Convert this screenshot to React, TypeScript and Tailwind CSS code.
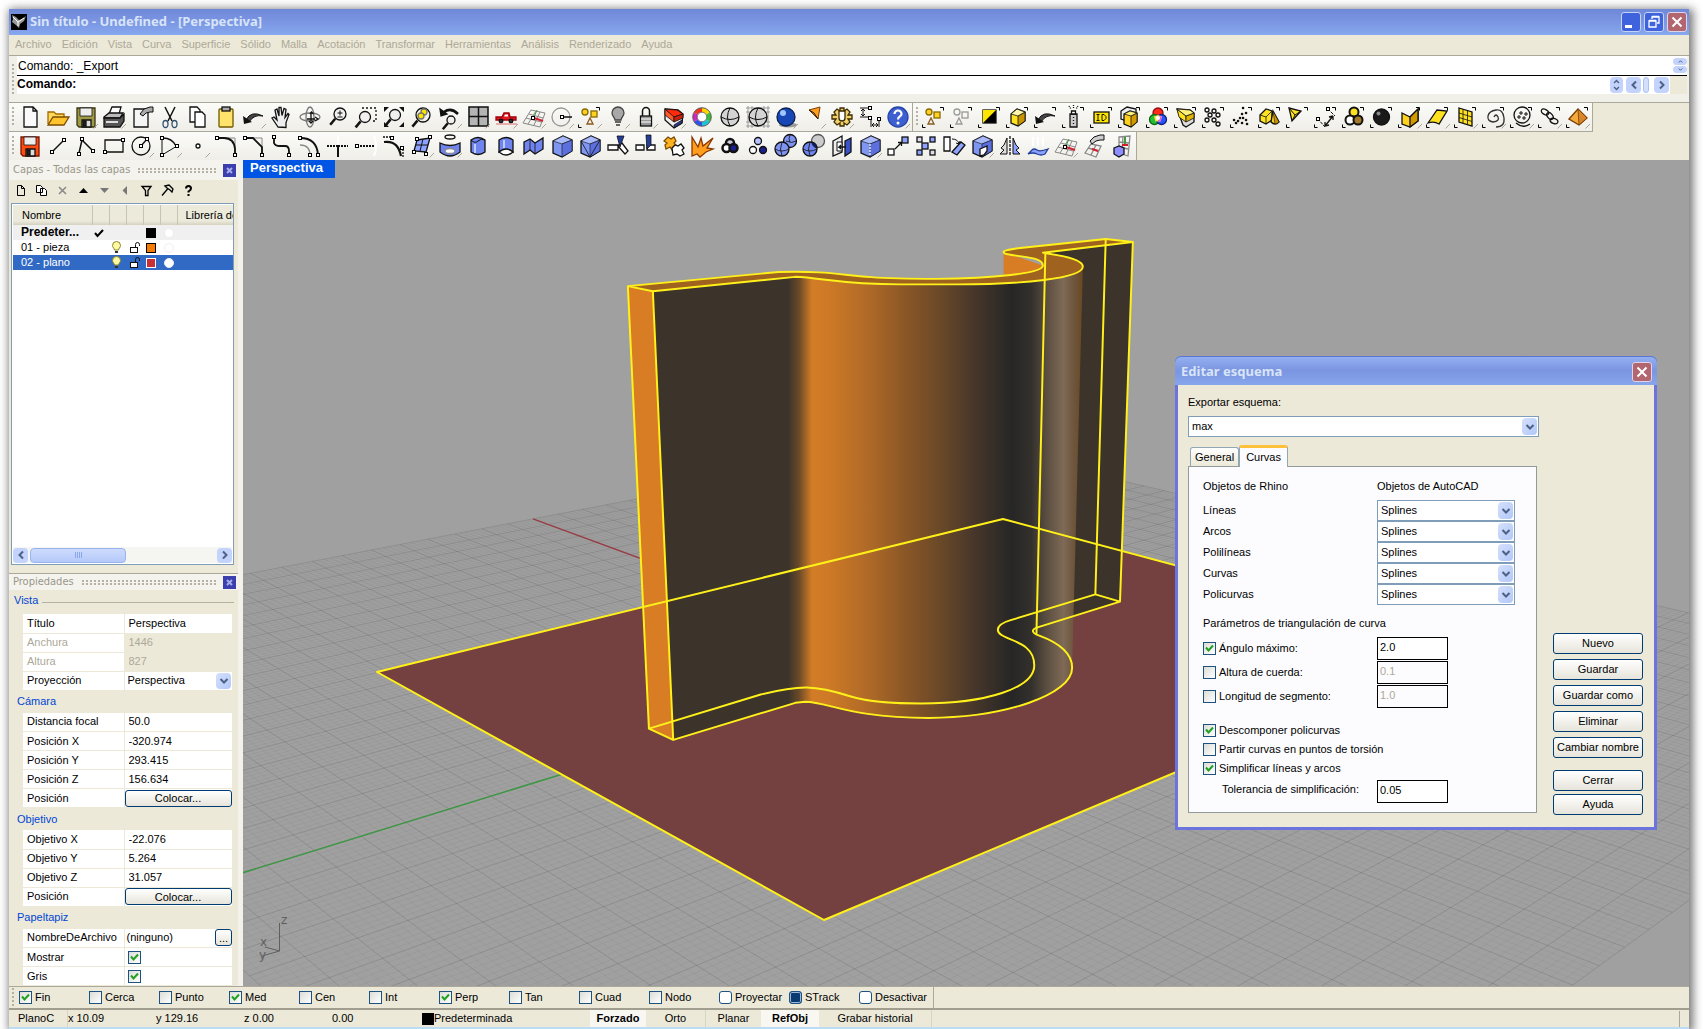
import React, { useId, useState } from 'react';

type Tool = [string, React.ReactNode];

// Small square handle used at curve ends
const Node = ({ x, y }: { x: number; y: number }) => (
  <rect x={x - 1.5} y={y - 1.5} width="3" height="3" fill="#fff" stroke="#000" strokeWidth="1" />
);
const Tick = () => <path d="M21.500 25.500L26 21" stroke="#aaa69a" strokeWidth="1" />;
const Sel = () => <path d="M20 4.500h3.500v3M2.500 21.500v3h3" stroke="#000" strokeWidth="1" />;
const Lens = ({ cx = 16, cy = 11, r = 6 }: { cx?: number; cy?: number; r?: number }) => (
  <>
    <path d={`M${cx - r * 0.8} ${cy + r * 0.8}L${cx - r * 0.8 - 5} ${cy + r * 0.8 + 6}`} strokeWidth="2.500" />
    <circle cx={cx} cy={cy} r={r} fill="#eee" fillOpacity=".7" />
  </>
);
const Cube = ({ fill = '#7f95f2', top = '#a9bafc', side = '#5c70dd' }: { fill?: string; top?: string; side?: string }) => (
  <>
    <path d="M5 9l10-5 9 4v11l-10 6-9-4z" fill={fill} />
    <path d="M5 9l10-5 9 4-10 4z" fill={top} strokeWidth=".6" />
    <path d="M14 12l10-4v11l-10 6z" fill={side} strokeWidth=".6" />
  </>
);
const Mesh = () => (
  <>
    <path d="M3 20l8-13 14 3-5 14zM6 15l15 4M9 11l14 4M8 21l8-13M14 22l6-13" stroke="#888" strokeWidth="1" />
    <path d="M14 15l9 3" stroke="#d21f2b" strokeWidth="2" />
    <path d="M14 14l3-7" stroke="#3e9c3e" strokeWidth="1" />
    <Node x={13} y={15} />
  </>
);
const UndoArrow = () => (
  <>
    <path d="M6 17Q11 7 23 13Q14 11 9 19z" fill="#444" strokeWidth="1" />
    <path d="M3 13l1 8 8-2z" fill="#111" stroke="none" />
  </>
);

const standardTools: Tool[] = [
  ['Nuevo', <path d="M8 4h9l4 4v16H8zM17 4v4h4" fill="#fafafa" />],
  ['Abrir', <><path d="M4 21V9h6l2 2h8v4" fill="#ffd95a" stroke="#a56a00" /><path d="M4 22l5-8h16l-5 8z" fill="#ffc32b" stroke="#7b4b00" /></>],
  ['Guardar', <><path d="M5 5h18v19H7l-2-2z" fill="#9f9846" stroke="#3a3712" /><path d="M8 5h12v8H8z" fill="#eee" strokeWidth=".8" /><path d="M10 17h9v7h-9z" fill="#ddd" /><path d="M11 18h3v5h-3z" fill="#222" /><Tick /></>],
  ['Imprimir', <><path d="M9 11l3-7h9l-2 7" fill="#fff" /><path d="M4 14l5-4h14l-3 5H4z" fill="#bbb" /><path d="M4 15h16l4-4v7l-4 6H4z" fill="#555" /><path d="M6 19h12" stroke="#ddd" strokeWidth="2" /><Tick /></>],
  ['Propiedades', <><path d="M6 6h14v18H6z" fill="#f4f4f4" /><path d="M12 11l4-5 6-2h3v5h-3l-4 1-3 3z" fill="#aaa" strokeWidth="1" /></>],
  ['Cortar', <><path d="M9 4l7 14M19 4l-7 14" strokeWidth="1.500" /><ellipse cx="9.500" cy="21" rx="2.500" ry="3.500" stroke="#33536f" /><ellipse cx="18.500" cy="21" rx="2.500" ry="3.500" stroke="#33536f" /></>],
  ['Copiar', <><path d="M6 4h7l3 3v12H6z" fill="#fff" /><path d="M11 9h7l3 3v12H11z" fill="#fff" /></>],
  ['Pegar', <><rect x="7" y="6" width="14" height="18" rx="1" fill="#ffe36b" stroke="#6f5a00" /><rect x="10" y="4" width="8" height="4" fill="#aaa" /></>],
  ['Deshacer', <><UndoArrow /><Tick /></>],
  ['Encuadre', <path d="M10 24l-6-9 2-1 3 3-2-10 2-1 2 7V4.500h2l1 8 2-7 2 1-1 8 3-4 1 1-3 8v5z" fill="#eee" />],
  ['Rotar vista', <><ellipse cx="14" cy="14" rx="10" ry="4" stroke="#777" /><ellipse cx="14" cy="14" rx="4" ry="10" stroke="#777" /><path d="M15 10v8M11 16h8M14 11l1.500-2 2 2M13 18l2 2 2-2M19 14l3 2-3 2" stroke="#111" /></>],
  ['Zoom dinámico', <><Lens /><path d="M13.500 10h5M16 7.500v5M13.500 14h5" strokeWidth="1" /></>],
  ['Zoom ventana', <><path d="M10 5h14v13h-4" strokeDasharray="2 2" /><Lens cx={13} cy={14} r={5.500} /></>],
  ['Zoom extensión', <><Lens cx={15} cy={12} r={5.500} /><path d="M4 4h5l-5 5zM24 4h-5l5 5zM4 24v-5l5 5zM24 24v-5l-5 5z" fill="#111" stroke="none" /></>],
  ['Zoom selección', <><Lens cx={15} cy={12} r={7} /><circle cx="16" cy="9" r="3" fill="#ffe600" stroke="#776" /><circle cx="13" cy="13" r="3" fill="#ffe600" stroke="#776" /></>],
  ['Vista anterior', <><path d="M8 9q7-5 14 2" strokeWidth="2.500" /><path d="M4 6l1 7 6-2z" fill="#111" /><Lens cx={15} cy={17} r={4} /><Tick /></>],
  ['4 vistas', <><rect x="5" y="4" width="19" height="19" fill="#b4b4b4" strokeWidth="1.500" /><path d="M14.500 4v19M5 13.500h19" strokeWidth="1.500" /><Tick /></>],
  ['Vista derecha', <><path d="M4 17v-3h6l2-4h5l1 4h6v3z" fill="#e01b24" stroke="#a00008" /><path d="M13 11.500h3v2h-4z" fill="#fff" stroke="none" /><circle cx="9" cy="18" r="1.800" fill="#333" /><circle cx="19" cy="18" r="1.800" fill="#333" /><path d="M4 21h21" stroke="#e08a8a" /><Tick /></>],
  ['Plano de construcción', <><Mesh /><Tick /></>],
  ['Refent', <><circle cx="13" cy="14" r="9" stroke="#999" /><path d="M14 14h10" strokeWidth="1.500" /><Node x={14} y={14} /><Tick /></>],
  ['Seleccionar', <><circle cx="9" cy="9" r="3" fill="#ffd21f" stroke="#8a6a00" /><rect x="15" y="8" width="6" height="6" fill="#ffd21f" stroke="#8a6a00" /><path d="M11 21l3-6 3 6z" stroke="#8a5a20" /><Sel /><Tick /></>],
  ['Ocultar', <><path d="M11 17c0-2-3-4-3-7a6 6 0 0112 0c0 3-3 5-3 7z" fill="#a8a8a8" stroke="#444" /><path d="M11 19h6M12 22h4" strokeWidth="2" stroke="#666" /><Tick /></>],
  ['Bloquear', <><path d="M10.500 13V8a3.500 3.500 0 017 0v5" strokeWidth="1.500" /><rect x="8.500" y="13" width="11" height="10" fill="#999" /><path d="M9 16h10M9 19h10" stroke="#ddd" /><Tick /></>],
  ['Capas', <><path d="M5 6l13 1 5 4-1 9-8 5-9-8z" fill="#eee" /><path d="M5 6l9 7v6l-9-7z" fill="#ff5a2c" strokeWidth=".8" /><path d="M5 6l12 1 6 4-9 3z" fill="#ff2a0c" strokeWidth=".8" /><path d="M14 14l9-3v4l-9 4z" fill="#c8200c" strokeWidth=".8" /><path d="M14 22l8-5v3l-8 5z" fill="#2a3a90" strokeWidth=".8" /><Tick /></>],
  ['Color', <><path d="M14 7a7 7 0 016 3.500" stroke="#ffd400" strokeWidth="4" /><path d="M20 10.500a7 7 0 010 7" stroke="#36c236" strokeWidth="4" /><path d="M20 17.500a7 7 0 01-6 3.500" stroke="#1ec4d8" strokeWidth="4" /><path d="M14 21a7 7 0 01-6-3.500" stroke="#3152e8" strokeWidth="4" /><path d="M8 17.500a7 7 0 010-7" stroke="#d326c4" strokeWidth="4" /><path d="M8 10.500A7 7 0 0114 7" stroke="#f2331f" strokeWidth="4" /><circle cx="14" cy="14" r="9.300" stroke="#333" strokeWidth=".8" /><circle cx="14" cy="14" r="4.800" fill="#fff" stroke="#555" strokeWidth=".8" /></>],
  ['Alámbrico', <><circle cx="14" cy="14" r="9" fill="#d4d4d4" /><path d="M14 5q-5 9 0 18M5 14q9 5 18 0" strokeWidth="1" /></>],
  ['Sombreado', <><path d="M4 3v22M8 3v22M20 3v22M24 3v22M2 5h24M2 9h24M2 19h24M2 23h24" stroke="#999" strokeWidth="1" /><circle cx="14" cy="14" r="9" fill="#d4d4d4" /><path d="M14 5q-5 9 0 18M5 14q9 5 18 0" strokeWidth="1" /></>],
  ['Renderizar', <><ellipse cx="16" cy="22" rx="9" ry="2.500" fill="#999" stroke="none" /><circle cx="14" cy="14" r="9" fill="#1746b5" stroke="#0a2050" /><circle cx="11" cy="10" r="3" fill="#9fc4ff" stroke="none" /><Tick /></>],
  ['Foco', <><path d="M9 7l11-3-2 12z" fill="#ff9d1f" stroke="#7a3d00" strokeWidth="1" /><path d="M9 7l5 3 4 6" strokeWidth="1" /><Tick /></>],
  ['Opciones', <><path d="M12 5h4v3l3-2 3 3-2 3h4v4h-4l2 3-3 3-3-2v3h-4v-3l-3 2-3-3 2-3H4v-4h4L6 9l3-3 3 2z" fill="#f1cf6b" stroke="#3a2a00" /><path d="M11 8v7a3 3 0 006 0V8z" fill="#fff" stroke="#3a2a00" /><Tick /></>],
  ['Acotación', <><path d="M4 5h10M4 14h10M7 6v7M5 8l2-2 2 2M5 11l2 2 2-2M15 15v9M23 15v9M16 22h6M18 20l-2 2 2 2M20 20l2 2-2 2" strokeWidth="1" /><Node x={14} y={5} /><Node x={14} y={15} /><Node x={23} y={16} /></>],
  ['Ayuda', <><circle cx="14" cy="14" r="10" fill="#3d5fd0" stroke="#2544a8" /><path d="M10.500 11a3.500 3.500 0 117 0c0 2.500-3.500 2.500-3.500 5.500" stroke="#fff" strokeWidth="2.200" /><circle cx="14" cy="20" r="1.500" fill="#fff" stroke="none" /><Tick /></>],
];

const selectTools: Tool[] = [
  ['Seleccionar todo', <><circle cx="9" cy="9" r="3" fill="#ffd21f" stroke="#8a6a00" /><rect x="14" y="9" width="6" height="6" fill="#ffd21f" stroke="#8a6a00" /><path d="M8 21l3-6 3 6z" stroke="#8a5a20" /><Sel /></>],
  ['No seleccionar', <><circle cx="9" cy="9" r="3" stroke="#999" /><rect x="14" y="9" width="6" height="6" stroke="#999" /><path d="M8 21l3-6 3 6z" stroke="#999" /><Sel /></>],
  ['Invertir selección', <><rect x="7" y="7" width="13" height="13" fill="#000" /><path d="M7 7h13L7 20z" fill="#ffe600" stroke="none" /><Sel /></>],
  ['Seleccionar último', <><path d="M7 11l6-5 8 3v9l-7 5-7-3z" fill="#ffe21f" /><path d="M14 13l7-4v9l-7 5z" fill="#c99300" strokeWidth=".8" /><path d="M7 11l6-5 8 3-7 4z" fill="#fff6a8" strokeWidth=".8" /><Sel /></>],
  ['Selección anterior', <><UndoArrow /><Sel /></>],
  ['Seleccionar por color', <><path d="M10 11h7v13h-7z" fill="#ccc" /><path d="M11.500 8h4v3h-4z" fill="#fff" /><path d="M13.500 14v1M13.500 17v1M13.500 20v1" /><path d="M9 3l2 3M13.500 2v3M18 3l-2 3" strokeDasharray="1 1" /><Sel /></>],
  ['Seleccionar por ID', <><rect x="6" y="9" width="15" height="11" fill="#ffe600" /><path d="M8.500 11.500h3M10 11.500v6M8.500 17.500h3M14 11.500v6h2l2-2v-2l-2-2z" strokeWidth="1" /><Sel /></>],
  ['Seleccionar duplicados', <><path d="M5 8l6-4 9 2v9l-6 4-9-3z" fill="#eee" /><path d="M8 11l6-3 7 2v9l-6 5-7-3z" fill="#ffcf1f" /><path d="M15 13l6-3v9l-6 5z" fill="#d39a00" strokeWidth=".8" /><path d="M8 11l6-3 7 2-6 3z" fill="#fff27a" strokeWidth=".8" /><Sel /></>],
  ['Seleccionar por capa', <><circle cx="14" cy="10" r="5" fill="#ff2a1a" stroke="#811" /><circle cx="10.500" cy="16.500" r="5" fill="#22c03a" stroke="#161" /><circle cx="17.500" cy="16.500" r="5" fill="#2b52ff" stroke="#127" /><path d="M10 13.500l4-1.500 4 1.500-1.500 5h-5z" fill="#ffe14a" stroke="none" /><path d="M14 13v5.500h2.500l1.500-5z" fill="#e060e0" stroke="none" /><circle cx="14" cy="15" r="2" fill="#fff" stroke="none" /><Sel /></>],
  ['Seleccionar sólidos', <><path d="M5 6l13 1 4 3v9l-8 5-3-2z" fill="#ddd" /><path d="M5 6l9 7v6l-7-5z" fill="#ffe21f" strokeWidth=".8" /><path d="M14 13l8-3v5l-8 4z" fill="#e0b400" strokeWidth=".8" /><path d="M5 6l13 1 4 3-8 3z" fill="#fff27a" strokeWidth=".8" /><Sel /></>],
  ['Seleccionar puntos', <><circle cx="7" cy="7" r="2" /><circle cx="14" cy="8" r="2" /><circle cx="10" cy="12" r="2" /><circle cx="18" cy="12" r="2" /><circle cx="7" cy="17" r="2" /><circle cx="14" cy="17" r="2" /><circle cx="18" cy="21" r="2" /><Sel /></>],
  ['Seleccionar nubes', <><path d="M15 5h.1M14 11h.1M18 10h.1M12 15h.1M6 17h.1M10 18h.1M15 15h.1M18 17h.1M14 20h.1M19 21h.1M8 20h.1" strokeWidth="2.500" strokeLinecap="round" /><Sel /></>],
  ['Seleccionar superficies', <><path d="M4 12l6-6 6 2v9l-6 4-6-3z" fill="#ffe21f" /><path d="M4 12l6 2 6-6M10 14v7" strokeWidth=".8" /><path d="M17 8l6 11q-4 4-8 0z" fill="#ffcf1f" /><path d="M17 8l6 11q-2 2-4 2z" fill="#c99300" strokeWidth=".6" /><Sel /></>],
  ['Seleccionar luces', <><path d="M5 5l12 3-9 10z" fill="#ffe21f" /><path d="M5 5l6 7 6-4M11 12l-3 6" strokeWidth="1" /><Sel /></>],
  ['Seleccionar cotas', <><path d="M6 16l7 8M16 6l7 7" strokeDasharray="3 1" strokeWidth="1" /><path d="M13 23l8-10M13 23v-4M13 23l4-1M21 13v4M21 13l-4 1" /><Node x={16} y={6} /><Node x={6} y={16} /><Sel /></>],
  ['Seleccionar bloques', <><circle cx="14" cy="9" r="4.500" fill="#ffe21f" strokeWidth="2" /><circle cx="10" cy="17" r="4.500" fill="#fff" strokeWidth="2" /><circle cx="18" cy="17" r="4.500" fill="#a37a2a" strokeWidth="2" /><Sel /></>],
  ['Seleccionar mallas', <><circle cx="13.500" cy="14" r="8" fill="#1a1a1a" /><circle cx="10.500" cy="10.500" r="2" fill="#888" stroke="none" /><Sel /></>],
  ['Seleccionar polisuperficies', <><path d="M6 10l8 4 8-8v12l-8 6-8-3z" fill="#ffd21f" /><path d="M14 14v10l8-6V6z" fill="#d39a00" /><Sel /><Tick /></>],
  ['Seleccionar abiertas', <><path d="M4 20l9-13 10 1-8 13q-5-3-11-1z" fill="#ffe21f" /><Sel /><Tick /></>],
  ['Seleccionar recortadas', <><path d="M7 5l13 4v14L7 19z" fill="#ffe21f" /><path d="M11 6v14M15.500 7.500v14M7 10l13 4M7 14.500l13 4" strokeWidth=".8" /><Sel /><Tick /></>],
  ['Seleccionar curvas', <><path d="M14 14q2-4 4 0t-5 5q-6-1-5-6t8-6 8 8-8 9" stroke="#333" /><Sel /><Tick /></>],
  ['Seleccionar control', <><circle cx="14" cy="12" r="8" /><path d="M8 20q7 6 14 1" /><path d="M12 9h2v2h-2zM17 10h2v2h-2zM10 13h2v2h-2zM15 14h2v2h-2z" fill="#fff" strokeWidth="1" /><Sel /><Tick /></>],
  ['Seleccionar cadena', <><ellipse cx="9" cy="9" rx="4" ry="2.500" transform="rotate(30 9 9)" /><ellipse cx="14" cy="13" rx="4" ry="2.500" transform="rotate(50 14 13)" /><ellipse cx="18" cy="18" rx="4" ry="2.500" transform="rotate(20 18 18)" /><Sel /><Tick /></>],
  ['Seleccionar pirámides', <><path d="M5 16l9-10 9 9-8 7z" fill="#f3a93c" stroke="#7a3d00" /><path d="M14 6l9 9-8 7z" fill="#d9852a" stroke="#7a3d00" strokeWidth=".8" /><Sel /><Tick /></>],
];

const modelTools: Tool[] = [
  ['Guardar rápido', <><path d="M5 5h18v19H7l-2-2z" fill="#ff4a12" stroke="#7a1500" /><path d="M8 5h12v8H8z" fill="#eee" strokeWidth=".8" /><path d="M10 17h9v7h-9z" fill="#ddd" /><path d="M11 18h3v5h-3z" fill="#222" /></>],
  ['Línea', <><path d="M9 19L19 9" strokeWidth="1.500" /><Node x={8} y={20} /><Node x={20} y={8} /></>],
  ['Polilínea', <><path d="M7 21L10 8l11 11" strokeWidth="1.500" /><Node x={7} y={22} /><Node x={10} y={7} /><Node x={21} y={19} /></>],
  ['Rectángulo', <><path d="M5 8h18v12H5z" /><Node x={5} y={20} /><Node x={23} y={8} /></>],
  ['Círculo', <><circle cx="13" cy="14" r="9" /><path d="M13 14l6-7" /><Node x={13} y={14} /><Node x={19} y={7} /><Tick /></>],
  ['Arco', <><path d="M6 6v17l15-9" strokeWidth="1" /><path d="M7 6q9 0 13 8" /><Node x={6} y={6} /><Node x={6} y={23} /><Node x={21} y={14} /><Tick /></>],
  ['Punto', <><circle cx="14" cy="14" r="2" fill="#fff" /><Tick /></>],
  ['Empalmar', <><path d="M5 6h18v18" stroke="#888" strokeWidth="1" /><path d="M5 6h7q10 0 11 11v6" strokeWidth="1.800" /><Node x={5} y={6} /><Node x={23} y={23} /></>],
  ['Chaflán', <><path d="M5 6h17v17" stroke="#888" strokeWidth="1" /><path d="M5 6h8l9 9v8" strokeWidth="1.800" /><Node x={5} y={6} /><Node x={22} y={23} /></>],
  ['Mezclar', <><path d="M6 5v6q1 3 6 3h5q4 0 4 5v4" strokeWidth="1.800" /><Node x={6} y={5} /><Node x={21} y={23} /></>],
  ['Desfasar', <><path d="M4 6q17 0 18 17" strokeWidth="1.800" /><path d="M4 13q10 0 10 10" stroke="#888" /><Node x={4} y={6} /><Node x={22} y={23} /><Node x={14} y={23} /></>],
  ['Recortar', <><path d="M14 3v9" stroke="#fff" strokeWidth="2" /><path d="M3 14h11" strokeDasharray="2 1" strokeWidth="2" /><path d="M14 14v11" strokeWidth="2" /><path d="M14 14h10" strokeDasharray="2 1" strokeWidth="2" /></>],
  ['Extender', <><path d="M8 14h14" strokeDasharray="2 1" strokeWidth="2" /><path d="M22 4q4 10 0 20" stroke="#fff" strokeWidth="2" /><Node x={5} y={14} /></>],
  ['Reconstruir', <><path d="M3 5h10M23 14v11" strokeDasharray="2 1" /><path d="M4 10q14-2 17 14" strokeWidth="2.200" /><Node x={12} y={6} /><Node x={22} y={16} /></>],
  ['Superficie por puntos', <><path d="M9 8l13-2-4 14-12-1z" fill="#8ea2ff" /><path d="M15 7l-3 12M8 13l12 0" strokeWidth="1" /><Node x={9} y={7} /><Node x={22} y={5} /><Node x={6} y={20} /><Node x={18} y={22} /><Tick /></>],
  ['Transición', <><ellipse cx="14" cy="5" rx="5" ry="2" /><path d="M4 11q10 5 20 0v9q-10 8-20 0z" fill="#6f84ee" /><ellipse cx="14" cy="19" rx="5" ry="2.500" fill="#fff" stroke="#889" /><Tick /></>],
  ['Barrido 1', <><path d="M7 8q7-5 14 0v12q-7 5-14 0z" fill="#6f84ee" /><path d="M7 8q4 4 7 1t7-1" strokeWidth="1" /><path d="M11 12v9" stroke="#bfcaff" strokeWidth="2" /></>],
  ['Barrido 2', <><path d="M7 8q7-5 14 0v12q-7-5-14 0z" fill="#6f84ee" /><path d="M12 8v8" stroke="#bfcaff" strokeWidth="2" /><path d="M7 20q7 6 14 0q-7-6-14 0z" fill="#fff" /></>],
  ['Revolución', <><path d="M4 10l6-3 5 4 8-5v11l-8 5-5-4-6 4z" fill="#6f84ee" /><path d="M10 7v11M15 11v11" strokeWidth=".8" /></>],
  ['Caja', <Cube />],
  ['Caja facetada', <><Cube /><path d="M5 9l9 16 10-17" strokeWidth=".8" /></>],
  ['Partir', <><path d="M4 13h10v5H4zM14 14l4-3 6 8-3 3z" fill="#fff" /><path d="M13 4h7l-4 11z" fill="#233e9a" strokeWidth=".8" /></>],
  ['Cortar sólido', <><path d="M4 13h8v5H4zM15 13h8v5h-8z" fill="#fff" /><path d="M14 3h5v10l-4 4z" fill="#233e9a" strokeWidth=".8" /></>],
  ['Unir', <><path d="M4 9l4-4 3 2 3-2 2 4-2 2 3 3-5 4-2-3-4 2-1-4 2-2z" fill="#ffb21f" stroke="#7a4d00" /><path d="M12 16l3-3 3 1 3-2 3 4-2 2 2 4-4 2-3-2-4 1z" fill="#fff" /></>],
  ['Descomponer', <path d="M4 24V5l6 10 3-9 2 8 10-8-6 10 6 1-7 3-6 5-3-3z" fill="#ff9d1f" stroke="#8a3800" />],
  ['Agrupar', <><circle cx="14" cy="11" r="4" fill="#ccd" strokeWidth="2.500" /><circle cx="10.500" cy="16" r="4" fill="#fff" strokeWidth="2.500" /><circle cx="17.500" cy="16" r="4" fill="#1a1f8a" strokeWidth="2.500" /></>],
  ['Desagrupar', <><circle cx="14" cy="9" r="3.500" fill="#b9c1ff" /><circle cx="9" cy="18" r="3.500" fill="#fff" /><circle cx="19" cy="18" r="3.500" fill="#1a1f8a" /></>],
  ['Unión booleana', <><circle cx="18" cy="9" r="6.500" fill="#7f93f2" /><circle cx="10" cy="17" r="7" fill="#7f93f2" /><path d="M10 10q-3 7 0 14M3 17q7 4 14 0M18 3q-2 4 0 7M14 9q6 3 10 0" strokeWidth=".8" /></>],
  ['Diferencia booleana', <><circle cx="18" cy="9" r="6.500" fill="#ccc" stroke="#555" /><circle cx="10" cy="17" r="7" fill="#6f84ee" /><path d="M10 10q-3 7 0 14M3 17q7 4 14 0" strokeWidth=".8" /><path d="M12 10a6.500 6.500 0 005 6q0-5-5-6z" fill="#0e1c6a" strokeWidth=".8" /></>],
  ['Extruir', <><path d="M5 9l9-5v16l-9 4z" fill="#eee" /><path d="M9 10h5v9H9z" fill="#fff" strokeWidth="1" /><path d="M17 9l6-3v14l-6 4z" fill="#3a52c8" /><path d="M18 15h-7l2-2M11 15l2 2" /></>],
  ['Tapar', <><Cube /><path d="M14 12v12" stroke="#fff" strokeDasharray="2 1" /><Tick /></>],
  ['Mover', <><path d="M11 17l6-6M14 10.500l3.500 0v3.500" /><rect x="4" y="17" width="6" height="6" fill="#fff" /><rect x="18" y="5" width="6" height="6" fill="#8ea2ff" /></>],
  ['Matriz', <><rect x="5" y="5" width="5" height="5" fill="#dde" /><rect x="18" y="5" width="5" height="5" fill="#8ea2ff" /><rect x="10" y="11" width="6" height="6" fill="#8ea2ff" /><rect x="5" y="18" width="5" height="5" fill="#8ea2ff" /><rect x="18" y="18" width="5" height="5" fill="#dde" /></>],
  ['Rotar', <><path d="M4 5h6v14H4z" fill="#fff" /><path d="M12 20l9-10 4 3-8 10z" fill="#8ea2ff" /><path d="M12 7q6 0 7 5M19 12l-3-1M19 12l1-3" strokeWidth="1" /></>],
  ['Editar sólido', <><Cube /><path d="M12 17l7-3v5l-3 4-4 1z" fill="#fff" /><Tick /></>],
  ['Simetría', <><path d="M14 4v20" strokeDasharray="3 1" /><path d="M11 6v16H4l4-4-3-2 3-3z" fill="#ddd" strokeWidth="1" /><path d="M17 6v16h7l-4-4 3-2-3-3z" fill="#8ea2ff" strokeWidth="1" /></>],
  ['Proyectar', <><path d="M9 5v9M14 5v9M19 5v9" stroke="#fff" strokeWidth="2" /><path d="M4 22l4-4q2-2 5 0t11-1l-3 5q-4 2-8 0t-9 0z" fill="#8ea2ff" stroke="#24419a" /></>],
  ['Plano C', <><Mesh /><Tick /></>],
  ['Mover plano C', <><path d="M5 21l6-9 10 2-5 11zM8 16l11 3M11 23l5-10" stroke="#888" /><path d="M10 9l4-4 6-2h4v5h-4l-4 1-4 3z" fill="#ccc" strokeWidth="1" /><path d="M12 17l6 2" stroke="#d21f2b" strokeWidth="2" /></>],
  ['Plano C a objeto', <><path d="M11 5l11-1-2 20-9-3zM15 4l-1 18M11 10l10 1M11 15l9 2" stroke="#888" /><path d="M17 5v8" stroke="#3e9c3e" strokeWidth="2" /><path d="M14 13h6" stroke="#d21f2b" strokeWidth="2" /><path d="M6 16l5-2 5 2v6l-5 3-5-3z" fill="#8e8eff" /></>],
];

const Grip = () => (
  <span className="mr-[2px] ml-[3px] h-5 w-[2px] bg-[repeating-linear-gradient(180deg,#b5b2a5_0_2px,transparent_2px_4px)]" />
);

const Toolbar = ({ tools, label }: { tools: Tool[]; label: string }) => (
  <div role="toolbar" aria-label={label} className="flex h-7 shrink-0 items-center border-r border-[#aca899] bg-gradient-to-b from-[#fbfbf9] to-[#efeee8]">
    <Grip />
    {tools.map(([name, art]) => (
      <button key={name} type="button" aria-label={name} className="h-7 w-7">
        <svg viewBox="0 0 28 28" className="size-7" fill="none" stroke="#111" strokeWidth="1.300">
          {art}
        </svg>
      </button>
    ))}
  </div>
);

const Chevron = ({ className = 'size-[10px]' }: { className?: string }) => (
  <svg viewBox="0 0 10 10" className={className} fill="none" stroke="#4d6185" strokeWidth="2">
    <path d="M1.500 3L5 6.500 8.500 3" />
  </svg>
);

const SelectBox = ({ options, className = '', border = true, label, id }: { options: string[]; className?: string; border?: boolean; label?: string; id?: string }) => (
  <div className={'relative bg-white ' + (border ? 'border border-[#7f9db9] ' : '') + className}>
    <select id={id} aria-label={label} className="block h-full w-full appearance-none bg-transparent pl-[3px] text-[11px] text-black outline-none">
      {options.map((o) => (
        <option key={o}>{o}</option>
      ))}
    </select>
    <span className="pointer-events-none absolute inset-y-px right-px flex w-[15px] items-center justify-center rounded-sm bg-gradient-to-br from-[#d5e0fc] to-[#b2c8f8]">
      <Chevron />
    </span>
  </div>
);

const Check = ({ label, checked = false, hideLabel = false, round = false }: { label: string; checked?: boolean; hideLabel?: boolean; round?: boolean }) => {
  const id = useId();
  const [on, setOn] = useState(checked);
  return (
    <span className="flex items-center">
      <span className="relative size-[13px] shrink-0">
        <input
          id={id}
          type="checkbox"
          checked={on}
          aria-label={hideLabel ? label : undefined}
          onChange={(e) => setOn(e.target.checked)}
          className={
            'block size-[13px] appearance-none border border-[#1c5180] ' +
            (round ? 'rounded-[3px] bg-white checked:bg-[#0b3a73] checked:shadow-[inset_0_0_0_1px_#9db7d8]' : 'bg-gradient-to-br from-[#dcdcd7] to-white')
          }
        />
        {on && !round && (
          <svg viewBox="0 0 13 13" className="pointer-events-none absolute inset-0" fill="none" stroke="#21a121" strokeWidth="2">
            <path d="M3 5.500l2.500 3L10 3.500" />
          </svg>
        )}
      </span>
      {!hideLabel && <label htmlFor={id} className="pl-[3px] whitespace-nowrap">{label}</label>}
    </span>
  );
};

const XpButton = ({ children, className = '' }: { children: React.ReactNode; className?: string }) => (
  <button type="button" className={'rounded-[3px] border border-[#003c74] bg-gradient-to-b from-white to-[#e6e4da] text-center whitespace-nowrap ' + className}>
    {children}
  </button>
);

const tahoma = '"DejaVu Sans Condensed", "Noto Sans", sans-serif';

const PanelHeader = ({ title, className = 'h-5' }: { title: string; className?: string }) => (
  <div className={'flex shrink-0 items-center bg-[#f4f3ee] pr-[2px] pl-1 ' + className}>
    <h2 className="pr-2 text-[11px] text-[#9a978a]" style={{ fontFamily: tahoma }}>{title}</h2>
    <span className="h-[5px] flex-1 bg-[repeating-linear-gradient(90deg,#b5b2a5_0_2px,transparent_2px_4px)] [mask-image:linear-gradient(#000_0_2px,transparent_2px_3px,#000_3px)]" />
    <button type="button" aria-label={'Cerrar ' + title} className="ml-[5px] size-[13px] bg-[#3c3fae]">
      <svg viewBox="0 0 13 13" stroke="#a9adec" strokeWidth="2">
        <path d="M4 4l5 5M9 4l-5 5" />
      </svg>
    </button>
  </div>
);

const menus = ['Archivo', 'Edición', 'Vista', 'Curva', 'Superficie', 'Sólido', 'Malla', 'Acotación', 'Transformar', 'Herramientas', 'Análisis', 'Renderizado', 'Ayuda'];

const Bulb = () => (
  <svg viewBox="0 0 13 13" className="size-[13px]" fill="#fff9a0" stroke="#8a8330">
    <path d="M4.500 9C4.500 7.500 2.500 6.500 2.500 4.500a4 4 0 018 0C10.500 6.500 8.500 7.500 8.500 9z" />
    <path d="M5 11h3" stroke="#333" strokeWidth="2" />
  </svg>
);
const OpenLock = () => (
  <svg viewBox="0 0 13 13" className="size-[13px]" fill="#fff" stroke="#111">
    <path d="M7.500 6V3.500a2 2 0 014 0V5" fill="none" />
    <rect x="2.500" y="6.500" width="7" height="5" />
  </svg>
);

interface Layer {
  name: string;
  current?: boolean;
  color: string;
  row: string;
}
const layers: Layer[] = [
  { name: 'Predeter...', current: true, color: 'bg-black', row: 'bg-[#f0f0f0] font-bold' },
  { name: '01 - pieza', color: 'bg-[#f57c00] border border-black', row: 'bg-white' },
  { name: '02 - plano', color: 'bg-[#c93036] border border-white', row: 'bg-[#316ac5] text-white' },
];

const LayersPanel = () => (
  <section className="flex flex-col">
    <PanelHeader title="Capas - Todas las capas" />
    <div className="flex h-[22px] items-center pb-px pl-1">
      {[
        ['Capa nueva', <path d="M4.500 2.500h4l3 3v7h-7zM8.500 2.500v3h3" />],
        ['Subcapa', <path d="M2.500 2.500h4l2 2v5h-6zM6.500 5.500h4l2 2v5h-6z" fill="#fff" />],
        ['Eliminar capa', <path d="M4 4l7 7M11 4l-7 7" stroke="#888" strokeWidth="1.500" />],
        ['Subir', <path d="M3 10l4.500-5 4.500 5z" fill="#000" stroke="none" />],
        ['Bajar', <path d="M3 5l4.500 5L12 5z" fill="#777" stroke="none" />],
        ['Nivel superior', <path d="M9 3v9L4.500 7.500z" fill="#777" stroke="none" />],
        ['Filtro', <path d="M3 3.500h9L9 7.500v5H6.500v-5z" strokeWidth="1.300" />],
        ['Herramientas de capa', <path d="M2 12.500l6-7M5 3l4-1 4 4-1 3-2-2-3-2z" strokeWidth="1.300" />],
        ['Ayuda de capas', <path d="M5 5.500q0-2.500 2.500-2.500t2.500 2.500q0 1.500-2.500 3v1M7.500 11v2" strokeWidth="2" />],
      ].map(([name, art]) => (
        <button key={name as string} type="button" aria-label={name as string} className="flex w-[21px] justify-start">
          <svg viewBox="0 0 15 15" className="size-[15px]" fill="none" stroke="#000">{art}</svg>
        </button>
      ))}
    </div>
    <div className="mt-px mr-1 ml-[2px] flex h-[362px] flex-col overflow-hidden border border-[#7f9db9] bg-white p-px">
      <table className="w-[260px] table-fixed border-collapse text-[11px] leading-[15px]">
        <colgroup>
          <col className="w-[79px]" />
          <col className="w-[17px]" />
          <col className="w-[17px]" />
          <col className="w-[17px]" />
          <col className="w-[17px]" />
          <col className="w-[17px]" />
          <col />
        </colgroup>
        <thead>
          <tr className="h-5 bg-gradient-to-b from-[#ebeadb] from-80% to-[#d5d1bf] text-left">
            <th className="border-r border-[#c7c5b2] pl-[9px] font-normal">Nombre</th>
            {[0, 1, 2, 3, 4].map((i) => (
              <td key={i} className="border-r border-[#c7c5b2]" />
            ))}
            <th className="pl-2 font-normal whitespace-nowrap">Librería de</th>
          </tr>
        </thead>
        <tbody>
          {layers.map((l) => (
            <tr key={l.name} className={'h-[15px] ' + l.row}>
              <td className={'pl-2 whitespace-nowrap ' + (l.current ? 'text-[12px]' : '')}>{l.name}</td>
              <td>
                {l.current && (
                  <svg viewBox="0 0 13 13" className="size-[13px]" fill="none" stroke="#000" strokeWidth="2">
                    <path d="M3 7l2.500 3L11 4" />
                  </svg>
                )}
              </td>
              <td className="pl-px">{!l.current && <Bulb />}</td>
              <td className="pl-[2px]">{!l.current && <OpenLock />}</td>
              <td><span className={'ml-[3px] block size-[10px] ' + l.color} /></td>
              <td><span className="ml-1 block size-[10px] rounded-full border border-[#eee] bg-white" /></td>
              <td />
            </tr>
          ))}
        </tbody>
      </table>
      <div className="mt-auto flex h-4 items-center bg-[#f5f5f1]">
        <button type="button" aria-label="Desplazar a la izquierda" className="flex size-[15px] items-center justify-center rounded-sm bg-[#c3d3fc]"><Chevron className="size-[10px] rotate-90" /></button>
        <span className="ml-[2px] flex h-[15px] w-24 items-center justify-center gap-px rounded-sm border border-[#98b4f0] bg-gradient-to-b from-[#cddbfe] to-[#b5c9f9]">
          {[0, 1, 2, 3].map((i) => <i key={i} className="h-[6px] w-px bg-[#8ba8ea]" />)}
        </span>
        <button type="button" aria-label="Desplazar a la derecha" className="ml-auto flex size-[15px] items-center justify-center rounded-sm bg-[#c3d3fc]"><Chevron className="size-[10px] -rotate-90" /></button>
      </div>
    </div>
  </section>
);

type Prop = [string, string, ('off' | 'select' | 'button' | 'file' | 'check')?];
const sections: { title: string; rows: Prop[] }[] = [
  { title: 'Vista', rows: [['Título', 'Perspectiva'], ['Anchura', '1446', 'off'], ['Altura', '827', 'off'], ['Proyección', 'Perspectiva', 'select']] },
  { title: 'Cámara', rows: [['Distancia focal', '50.0'], ['Posición X', '-320.974'], ['Posición Y', '293.415'], ['Posición Z', '156.634'], ['Posición', 'Colocar...', 'button']] },
  { title: 'Objetivo', rows: [['Objetivo X', '-22.076'], ['Objetivo Y', '5.264'], ['Objetivo Z', '31.057'], ['Posición', 'Colocar...', 'button']] },
  { title: 'Papeltapiz', rows: [['NombreDeArchivo', '(ninguno)', 'file'], ['Mostrar', '', 'check'], ['Gris', '', 'check']] },
];

const PropertyValue = ({ row }: { row: Prop }) => {
  const [label, value, kind] = row;
  if (kind === 'select') return <SelectBox options={[value, 'Paralela']} label={label} border={false} className="h-[18px] w-full" />;
  if (kind === 'button') return <XpButton className="block h-[17px] w-[107px] leading-[14px]">{value}</XpButton>;
  if (kind === 'check') return <span className="block pl-[3px]"><Check label={label} checked hideLabel /></span>;
  if (kind === 'file')
    return (
      <span className="flex items-center justify-between pl-[2px]">
        {value}
        <XpButton className="h-[17px] w-[17px] leading-[14px]">...</XpButton>
      </span>
    );
  return <input aria-label={label} defaultValue={value} disabled={kind === 'off'} className="block w-full bg-transparent pl-1 outline-none" />;
};

const PropertiesPanel = () => (
  <section className="mt-2 flex min-h-0 flex-1 flex-col border-t border-[#aca899]">
    <PanelHeader title="Propiedades" className="h-4" />
    <div className="mr-1 ml-[2px] min-h-0 flex-1 overflow-hidden bg-[#ece9d8] text-[11px] leading-[15px]">
      {sections.map((s, i) => (
        <div key={s.title}>
          <div className={'flex items-center gap-1 text-[#0046d5] ' + (i === 0 ? 'h-6 pb-1 pl-[3px]' : 'h-[22px] pl-[6px]')}>
            <h3>{s.title}</h3>
            {i === 0 && <span className="mt-1 h-px flex-1 bg-[#b5b2a0]" />}
          </div>
          <table className="mr-[3px] ml-3 w-[209px] table-fixed border-collapse">
            <tbody>
              {s.rows.map((r) => (
                <tr key={r[0]} className="h-[19px] border-b border-[#ece9d8]">
                  <th className={'w-[101px] border-r border-[#ece9d8] bg-white pl-1 text-left font-normal ' + (r[2] === 'off' ? 'text-[#aca899]' : '')}>{r[0]}</th>
                  <td className={r[2] === 'off' ? 'text-[#aca899]' : 'bg-white'}><PropertyValue row={r} /></td>
                </tr>
              ))}
            </tbody>
          </table>
        </div>
      ))}
    </div>
  </section>
);

// Projects ground-plane coordinates (-1..1) to viewport pixels
const project = (u: number, v: number) => {
  const w = 1 - 0.3 * u - 0.287 * v;
  return [(230.7 * u - 806.8 * v + 923.6) / w, (-12 * u - 23 * v + 662.6) / w].map((n) => n.toFixed(1)).join(' ');
};
const gridPath = (steps: number) => {
  let d = '';
  for (let i = -steps; i <= steps; i++) {
    const t = i / steps;
    d += `M${project(t, -1)}L${project(t, 1)}M${project(-1, t)}L${project(1, t)}`;
  }
  return d;
};

const Viewport = () => (
  <svg viewBox="243 160 1446 827" preserveAspectRatio="xMinYMin slice" className="absolute inset-0 h-full w-full" fill="none">
    <defs>
      <linearGradient id="body" gradientUnits="userSpaceOnUse" x1="148" x2="1352" y1="0" y2="0">
        <stop offset=".315" stopColor="#3c342b" />
        <stop offset=".34" stopColor="#6b4a28" />
        <stop offset=".37" stopColor="#d37c26" />
        <stop offset=".41" stopColor="#cd7926" />
        <stop offset=".5" stopColor="#b06a27" />
        <stop offset=".59" stopColor="#895626" />
        <stop offset=".67" stopColor="#694828" />
        <stop offset=".75" stopColor="#46362a" />
        <stop offset=".835" stopColor="#262626" />
        <stop offset=".88" stopColor="#33302c" />
        <stop offset=".915" stopColor="#5a4d40" />
        <stop offset=".955" stopColor="#7f6a56" />
        <stop offset=".98" stopColor="#6d553c" />
        <stop offset="1" stopColor="#6b4820" />
      </linearGradient>
    </defs>
    <path d={gridPath(100)} stroke="#000" strokeOpacity=".05" strokeWidth=".7" />
    <path d={gridPath(20)} stroke="#000" strokeOpacity=".08" />
    <path d={`M${project(-1, 0)}L${project(0, 0)}`} stroke="#973f47" strokeWidth="1.500" />
    <path d={`M${project(0, 0)}L${project(0, 1)}`} stroke="#3f9645" strokeWidth="1.500" />
    <path d="M377 672L1003 519 1476 646 824 920z" fill="#754040" />
    <g transform="translate(600 220) scale(.35714 .34435)">
      <path d="M1130 93L1240 132 1240 175 1130 175z" fill="#d97d24" />
      <path d="M1240 95L1492 64 1456 1108 1222 1185z" fill="#3c342b" />
      <path d="M78 192L148 207 205 1510 137 1477z" fill="#d97d24" />
      <path d="M148 207L547 165C620 168 680 187 840 187H1000C1180 187 1352 170 1352 135L1322 1300C1322 1380 1130 1445 920 1446C700 1446 640 1400 575 1399L547 1402 205 1510z" fill="url(#body)" />
      <path d="M78 192L500 151C640 148 660 158 760 166C820 171 880 171 940 171C1100 170 1240 155 1240 132C1240 100 1130 108 1130 93C1130 88 1150 85 1170 82L1416 55 1492 64 1240 95C1240 97 1352 106 1352 135C1352 170 1180 187 1000 187H840C680 187 620 168 547 165L148 207z" fill="#a0621f" />
    </g>
    <g stroke="#fff01a" strokeWidth="2" strokeLinejoin="round">
      <path d="M377 672L1003 519 1476 646 824 920z" />
      <g transform="translate(600 220) scale(.35714 .34435)" strokeWidth="5.500">
        <path d="M78 192L500 151C640 148 660 158 760 166C820 171 880 171 940 171C1100 170 1240 155 1240 132C1240 100 1130 108 1130 93C1130 88 1150 85 1170 82L1416 55 1492 64 1240 95C1240 97 1352 106 1352 135C1352 170 1180 187 1000 187H840C680 187 620 168 547 165L148 207z" />
        <path d="M137 1477L450 1378C560 1350 600 1350 700 1383C760 1402 830 1404 900 1404C1080 1404 1216 1360 1216 1293C1216 1215 1114 1222 1114 1190C1114 1175 1130 1168 1150 1162L1387 1087 1456 1108 1225 1183C1205 1190 1210 1200 1230 1207C1290 1230 1322 1260 1322 1300C1322 1380 1130 1445 920 1446C700 1446 640 1400 575 1399L547 1402 205 1510z" />
        <path d="M78 192L137 1477M148 207L205 1510M1247 95L1222 1205M1416 55L1387 1087M1492 64L1456 1108" />
      </g>
    </g>
    <path d="M279.500 923V951L265 947M279.500 951L262 956" stroke="#5f5f5f" />
    <g fill="#5f5f5f" fontFamily="DejaVu Sans" fontSize="12">
      <text x="281" y="924">z</text>
      <text x="260" y="946">x</text>
      <text x="259" y="959">y</text>
    </g>
  </svg>
);

const curveTypes = ['Líneas', 'Arcos', 'Polilíneas', 'Curvas', 'Policurvas'];
const tessellation: [string, string, boolean][] = [
  ['Ángulo máximo:', '2.0', true],
  ['Altura de cuerda:', '0.1', false],
  ['Longitud de segmento:', '1.0', false],
];

const SchemeDialog = () => (
  <div role="dialog" aria-labelledby="dlg-title" className="absolute top-[196px] right-8 w-[482px] rounded-t-md border-[3px] border-t-0 border-[#6a74dc] bg-[#ece9d8] text-[11px] leading-[15px] text-black">
    <div className="-mx-[3px] flex h-[29px] items-center justify-between rounded-t-md bg-gradient-to-b from-[#96b2f2] via-[#7b95e0] to-[#86a6ec] pt-[2px] pr-[5px] pl-[6px] shadow-[inset_0_1px_0_#5b74d0]">
      <h2 id="dlg-title" className="text-[13px] font-bold text-[#d8e4f8]" style={{ fontFamily: '"Noto Sans", sans-serif' }}>Editar esquema</h2>
      <button type="button" aria-label="Cerrar" className="size-5 rounded-[3px] border border-[#e0d5e8] bg-[#b2666f]">
        <svg viewBox="0 0 18 18" stroke="#fff" strokeWidth="2"><path d="M4.500 4.500l9 9M13.500 4.500l-9 9" /></svg>
      </button>
    </div>
    <div className="flex gap-4 px-[10px] pt-[10px] pb-3">
      <div className="w-[349px]">
        <label htmlFor="scheme" className="block">Exportar esquema:</label>
        <SelectBox id="scheme" options={['max', 'Predeterminado']} className="mt-[6px] h-[21px] w-[351px]" />
        <div role="tablist" className="relative mt-2 flex h-[21px] items-end pl-[2px]">
          <button role="tab" type="button" aria-selected="false" className="h-[19px] rounded-t-[3px] border border-b-0 border-[#91a7b4] bg-gradient-to-b from-white to-[#ece9d8] px-1 pt-px">General</button>
          <button role="tab" type="button" aria-selected="true" className="-mb-px h-[22px] rounded-t-[3px] border border-t-[3px] border-b-0 border-[#91a7b4] border-t-[#ffc13b] bg-[#fcfcfe] px-[6px] pb-px">Curvas</button>
        </div>
        <div role="tabpanel" className="h-[347px] border border-[#919b9c] bg-[#fcfcfe] px-[14px] pt-3">
          <div className="flex items-center">
            <span className="w-[174px]">Objetos de Rhino</span>
            <span>Objetos de AutoCAD</span>
          </div>
          <div className="mt-[6px]">
            {curveTypes.map((c) => (
              <div key={c} className="flex h-[21px] items-center">
                <label htmlFor={'t-' + c} className="w-[174px]">{c}</label>
                <SelectBox id={'t-' + c} options={['Splines', 'Polilíneas']} className="h-[21px] w-[138px]" />
              </div>
            ))}
          </div>
          <p className="mt-[11px]">Parámetros de triangulación de curva</p>
          <div className="mt-[6px] flex flex-col gap-px">
            {tessellation.map(([label, value, on]) => (
              <div key={label} className="flex h-[23px] items-center">
                <span className="w-[174px]"><Check label={label} checked={on} /></span>
                <input aria-label={label} defaultValue={value} disabled={!on} className="h-[23px] w-[71px] border border-black bg-white px-[2px] pb-1 disabled:bg-[#fcfcfe] disabled:text-[#aca899]" />
              </div>
            ))}
          </div>
          <div className="mt-[15px] flex flex-col gap-1">
            <Check label="Descomponer policurvas" checked />
            <Check label="Partir curvas en puntos de torsión" />
            <Check label="Simplificar líneas y arcos" checked />
          </div>
          <div className="mt-1 flex h-[23px] items-center">
            <label htmlFor="tol" className="w-[174px] pb-1 pl-[19px]">Tolerancia de simplificación:</label>
            <input id="tol" defaultValue="0.05" className="h-[23px] w-[71px] border border-black bg-white px-[2px] pb-1" />
          </div>
        </div>
      </div>
      <div className="flex w-[90px] flex-col gap-[5px] pt-[238px]">
        {['Nuevo', 'Guardar', 'Guardar como', 'Eliminar', 'Cambiar nombre'].map((b) => (
          <XpButton key={b} className="h-[21px]">{b}</XpButton>
        ))}
        <div className="mt-[7px] flex flex-col gap-[3px]">
          <XpButton className="h-[21px]">Cerrar</XpButton>
          <XpButton className="h-[21px]">Ayuda</XpButton>
        </div>
      </div>
    </div>
  </div>
);

const snaps: [string, boolean][] = [
  ['Fin', true], ['Cerca', false], ['Punto', false], ['Med', true], ['Cen', false], ['Int', false], ['Perp', true],
  ['Tan', false], ['Cuad', false], ['Nodo', false], ['Proyectar', false], ['STrack', true], ['Desactivar', false],
];

const App: React.FC = () => {
  const [command, setCommand] = useState('');

  return (
    <div className="flex h-screen flex-col overflow-hidden bg-white pt-[9px] pr-[14px] pl-[9px] text-[11px] text-black" style={{ fontFamily: '"Liberation Sans", Arial, sans-serif' }}>
      <div className="flex min-h-0 flex-1 flex-col bg-[#ece9d8] shadow-[2px_2px_9px_2px_rgba(0,0,0,0.55)]">
        <header className="flex h-[26px] shrink-0 items-center bg-gradient-to-b from-[#6f88d8] via-[#7b96e3] to-[#86a8ee] pr-[2px] pl-[2px]">
          <svg viewBox="0 0 16 16" className="size-4 bg-black">
            <path d="M1 1l4 2 3 3 3-1 4-3-2 5-4 3-1 4-3-3-4-3 1-3z" fill="#999" />
            <path d="M2 3l5 5 6-4M7 8v4" stroke="#fff" fill="none" />
          </svg>
          <h1 className="pl-[3px] text-[13px] font-bold text-[#d8e4f8]" style={{ fontFamily: '"Noto Sans", sans-serif' }}>Sin título - Undefined - [Perspectiva]</h1>
          <div className="ml-auto flex gap-[3px]">
            <button type="button" aria-label="Minimizar" className="size-5 rounded-[3px] border border-[#c5d3f5] bg-[#3e63dd]">
              <svg viewBox="0 0 18 18"><path d="M3 12h7v3H3z" fill="#fff" /></svg>
            </button>
            <button type="button" aria-label="Restaurar" className="size-5 rounded-[3px] border border-[#c5d3f5] bg-[#3e63dd]">
              <svg viewBox="0 0 18 18" fill="none" stroke="#fff" strokeWidth="1.300"><path d="M7 6V4h7v6h-2M7 3.500h7M4 8h7v6H4zM4 7.500h7" /></svg>
            </button>
            <button type="button" aria-label="Cerrar ventana" className="size-5 rounded-[3px] border border-[#e0d5e8] bg-[#b2666f]">
              <svg viewBox="0 0 18 18" stroke="#fff" strokeWidth="2"><path d="M4.500 4.500l9 9M13.500 4.500l-9 9" /></svg>
            </button>
          </div>
        </header>

        <nav className="flex h-[21px] shrink-0 items-center gap-[10px] border-b border-[#aca899] pb-[2px] pl-[6px] text-[#aca899]">
          {menus.map((m) => (
            <button key={m} type="button">{m}</button>
          ))}
        </nav>

        <div className="flex h-[47px] shrink-0 border-b border-[#aca899] bg-[#f0efe8] pr-[2px]">
          <div className="flex w-2 justify-center py-2"><span className="w-[2px] bg-[repeating-linear-gradient(180deg,#b5b2a5_0_2px,transparent_2px_4px)]" /></div>
          <div className="flex flex-1 flex-col">
            <div className="flex h-5 items-center justify-between border-b border-black bg-white pl-px text-[12px]">
              <p>Comando: _Export</p>
              <div className="flex flex-col gap-px">
                <button type="button" aria-label="Historial arriba" className="flex h-[7px] w-[14px] items-center justify-center rounded-sm bg-[#c3d3fc]"><Chevron className="size-[5px] rotate-180" /></button>
                <button type="button" aria-label="Historial abajo" className="flex h-[7px] w-[14px] items-center justify-center rounded-sm bg-[#c3d3fc]"><Chevron className="size-[5px]" /></button>
              </div>
            </div>
            <div className="flex h-[18px] items-center bg-white">
              <label htmlFor="cmd" className="pb-[2px] text-[12px] font-bold">Comando:</label>
              <input id="cmd" value={command} onChange={(e) => setCommand(e.target.value)} className="h-full min-w-0 flex-1 px-1 outline-none" />
              <button type="button" aria-label="Comandos recientes" className="mr-[3px] flex h-4 w-[13px] flex-col items-center justify-center rounded-sm bg-[#c3d3fc]">
                <Chevron className="size-[7px] rotate-180" />
                <Chevron className="size-[7px]" />
              </button>
              <button type="button" aria-label="Anterior" className="flex h-4 w-[15px] items-center justify-center rounded-sm bg-[#c3d3fc]"><Chevron className="size-[10px] rotate-90" /></button>
              <span className="ml-[2px] h-4 w-[6px] rounded-sm border border-[#a9c0f5] bg-[#d3dffc]" />
              <button type="button" aria-label="Siguiente" className="ml-[5px] flex h-4 w-[15px] items-center justify-center rounded-sm bg-[#c3d3fc]"><Chevron className="size-[10px] -rotate-90" /></button>
              <span className="ml-px h-full w-[17px] bg-[#ece9d8]" />
            </div>
          </div>
        </div>

        <div className="flex h-[29px] shrink-0 items-start">
          <div className="flex border-b border-[#aca899]">
            <Toolbar tools={standardTools} label="Estándar" />
            <Toolbar tools={selectTools} label="Selección" />
          </div>
        </div>
        <div className="flex h-7 shrink-0">
          <Toolbar tools={modelTools} label="Principal" />
        </div>

        <div className="flex min-h-0 flex-1">
          <aside className="flex w-[234px] shrink-0 flex-col border-r-[5px] border-[#f2f1ea]">
            <LayersPanel />
            <PropertiesPanel />
          </aside>
          <main className="relative flex-1 overflow-hidden bg-[#a0a0a0]">
            <Viewport />
            <span className="absolute top-0 left-0 flex h-[18px] w-[92px] items-center bg-[#0055e5] pb-[2px] pl-[7px] text-[13px] font-bold text-white">Perspectiva</span>
            <SchemeDialog />
          </main>
        </div>

        <div className="flex h-[22px] shrink-0 items-center border-t border-[#aca899]">
          <div className="flex h-full items-center border-r border-[#aca899] pr-[6px]">
            <Grip />
            <span className="w-[3px]" />
            {snaps.map(([label, on], i) => (
              <span key={label} className={i === snaps.length - 1 ? '' : 'w-[70px]'}><Check label={label} checked={on} round={i > 9} /></span>
            ))}
          </div>
        </div>
        <footer className="flex h-[21px] shrink-0 items-center border-t-2 border-b-2 border-t-[#a19e90] border-b-[#bcdcf5] pl-[9px]">
          <span className="w-[50px] border-r border-[#d8d4c0]">PlanoC</span>
          <span className="w-[88px]">x 10.09</span>
          <span className="w-[88px]">y 129.16</span>
          <span className="w-[88px]">z 0.00</span>
          <span className="w-[90px]">0.00</span>
          <span className="flex w-[168px] items-center"><i className="size-3 bg-black" />Predeterminada</span>
          <div className="flex h-full flex-1 items-center text-center">
            <button type="button" className="h-full w-[56px] bg-[#f8f7f2] font-bold">Forzado</button>
            <button type="button" className="h-full w-[60px] border-r border-[#d8d4c0]">Orto</button>
            <button type="button" className="h-full w-[55px]">Planar</button>
            <button type="button" className="h-full w-[58px] bg-[#f8f7f2] font-bold">RefObj</button>
            <button type="button" className="h-full w-[113px] border-r border-[#d8d4c0]">Grabar historial</button>
            <span className="mr-[9px] ml-auto h-4 border-r border-[#aca899]" />
          </div>
        </footer>
      </div>
    </div>
  );
};

export default App;
